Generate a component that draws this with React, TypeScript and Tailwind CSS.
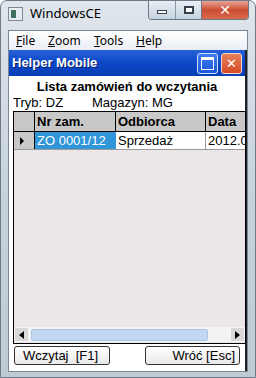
export default function App() {
  return (
    <div
      className="relative w-[256px] h-[378px] overflow-hidden rounded-t-[7px] border border-[#6d7a88] bg-gradient-to-b from-[#dfe6ec] via-[#c8d2dc] to-[#c0cad4]"
      style={{ fontFamily: '"Segoe UI", "Noto Sans", "DejaVu Sans", sans-serif' }}
    >
      {/* title bar */}
      <div className="flex h-[29px] items-start">
        <div className="ml-[7px] mt-[6px] flex h-[14px] w-[15px] items-center border border-[#7c8a96] bg-[#e6ecef]">
          <div className="ml-[2px] h-[8px] w-[5px] bg-[#3f6f63]" />
        </div>
        <span className="ml-[7px] mt-[4px] text-[13px] leading-[17px] text-black">WindowsCE</span>
        <div className="ml-auto mr-[6px] flex h-[19px] overflow-hidden rounded-b-[4px] border border-t-0 border-[#6a7785]">
          <div className="flex w-[27px] items-center justify-center border-r border-[#8b97a3] bg-gradient-to-b from-[#e9eff5] to-[#c6d3df]">
            <div className="mt-[4px] h-[4px] w-[10px] border border-[#38414b] bg-white" />
          </div>
          <div className="flex w-[26px] items-center justify-center border-r border-[#6a7785] bg-gradient-to-b from-[#e9eff5] to-[#c6d3df]">
            <div className="h-[8px] w-[10px] border-2 border-[#38414b] bg-white" />
          </div>
          <div className="flex w-[46px] items-center justify-center bg-gradient-to-b from-[#e6a394] via-[#cc4b33] to-[#d86b4d] text-[14px] font-bold leading-none text-white">
            ✕
          </div>
        </div>
      </div>

      {/* client */}
      <div className="mx-[7px] flex flex-col border border-[#7a8794] bg-white">
        {/* menu */}
        <div className="flex h-[19px] items-center bg-gradient-to-b from-[#ffffff] to-[#e9eef4] text-[12px] text-black">
          <span className="ml-[7px] w-[32px]"><u>F</u>ile</span>
          <span className="w-[46px]"><u>Z</u>oom</span>
          <span className="w-[42px]"><u>T</u>ools</span>
          <span><u>H</u>elp</span>
        </div>

        {/* CE window */}
        <div
          className="flex h-[321px] flex-col border-r-2 border-[#222]"
          style={{ fontFamily: '"Liberation Sans", "Noto Sans", sans-serif' }}
        >
          <div className="flex h-[26px] items-center bg-gradient-to-b from-[#2760d6] via-[#0b47c8] to-[#0a3fb4] px-[3px]">
            <span className="text-[13px] font-bold text-white [text-shadow:1px_1px_0_#0a1f6a]">
              Helper Mobile
            </span>
            <div className="ml-auto flex gap-[3px]">
              <div className="flex h-[21px] w-[21px] items-center justify-center rounded-[3px] border border-[#cfe0ff] bg-gradient-to-b from-[#3c7df0] to-[#1b58d8]">
                <div className="h-[13px] w-[13px] border border-white border-t-[3px]" />
              </div>
              <div className="flex h-[21px] w-[21px] items-center justify-center rounded-[3px] border border-[#f5d6cc] bg-gradient-to-b from-[#e8805c] to-[#d34a22] text-[13px] leading-none text-white">
                ✕
              </div>
            </div>
          </div>

          <div className="flex flex-1 flex-col bg-white px-[4px] text-[13px] text-black">
            <div className="mt-[2px] text-center text-[13px] font-bold leading-[17px]">
              Lista zamówień do wczytania
            </div>
            <div className="flex leading-[15px]">
              <span className="w-[79px]">Tryb: DZ</span>
              <span>Magazyn: MG</span>
            </div>

            {/* grid */}
            <div className="mt-[1px] flex h-[233px] w-[233px] flex-col border border-black bg-[#ebe7e8]">
              <div className="flex h-[20px] border-b border-black bg-[#c8c8c8] font-bold">
                <div className="w-[21px] border-r border-black" />
                <div className="w-[81px] border-r border-black pl-[2px] leading-[19px]">Nr zam.</div>
                <div className="w-[90px] border-r border-black pl-[2px] leading-[19px]">Odbiorca</div>
                <div className="flex-1 overflow-hidden whitespace-nowrap pl-[2px] leading-[19px]">Data</div>
              </div>
              <div className="flex h-[18px] border-b border-[#9a9a9a]">
                <div className="flex w-[21px] items-center border-r border-black bg-[#c8c8c8] pl-[6px]">
                  <div className="h-0 w-0 border-y-[4px] border-l-[4px] border-y-transparent border-l-black" />
                </div>
                <div className="w-[81px] bg-[#3096d8] pl-[2px] leading-[17px] text-white">ZO 0001/12</div>
                <div className="w-[90px] border-r border-[#9a9a9a] bg-white pl-[2px] leading-[17px]">Sprzedaż</div>
                <div className="flex-1 overflow-hidden whitespace-nowrap bg-white pl-[2px] leading-[17px]">2012.01</div>
              </div>
              <div className="flex-1" />
              {/* h scrollbar */}
              <div className="mb-[1px] flex h-[15px] items-center bg-[#f3f3f3] px-[1px]">
                <div className="flex h-[13px] w-[13px] items-center justify-center bg-[#d8d8d8]">
                  <div className="h-0 w-0 border-y-[4px] border-r-[5px] border-y-transparent border-r-black" />
                </div>
                <div className="ml-[3px] h-[12px] w-[177px] rounded-[2px] border border-[#aac6e6] bg-[#c3d8f0]" />
                <div className="ml-auto flex h-[13px] w-[13px] items-center justify-center bg-[#d8d8d8]">
                  <div className="h-0 w-0 border-y-[4px] border-l-[5px] border-y-transparent border-l-black" />
                </div>
              </div>
            </div>

            {/* buttons */}
            <div className="mt-[2px] flex justify-between px-[1px]">
              <button className="h-[19px] w-[96px] rounded-[3px] border border-[#333] bg-gradient-to-b from-white to-[#e9e9e9] pl-[8px] text-left text-[13px] leading-[16px]">
                Wczytaj&nbsp; [F1]
              </button>
              <button className="h-[19px] w-[95px] rounded-[3px] border border-[#333] bg-gradient-to-b from-white to-[#e9e9e9] pr-[4px] text-right text-[13px] leading-[16px]">
                Wróć [Esc]
              </button>
            </div>
          </div>
        </div>
      </div>
    </div>
  );
}
